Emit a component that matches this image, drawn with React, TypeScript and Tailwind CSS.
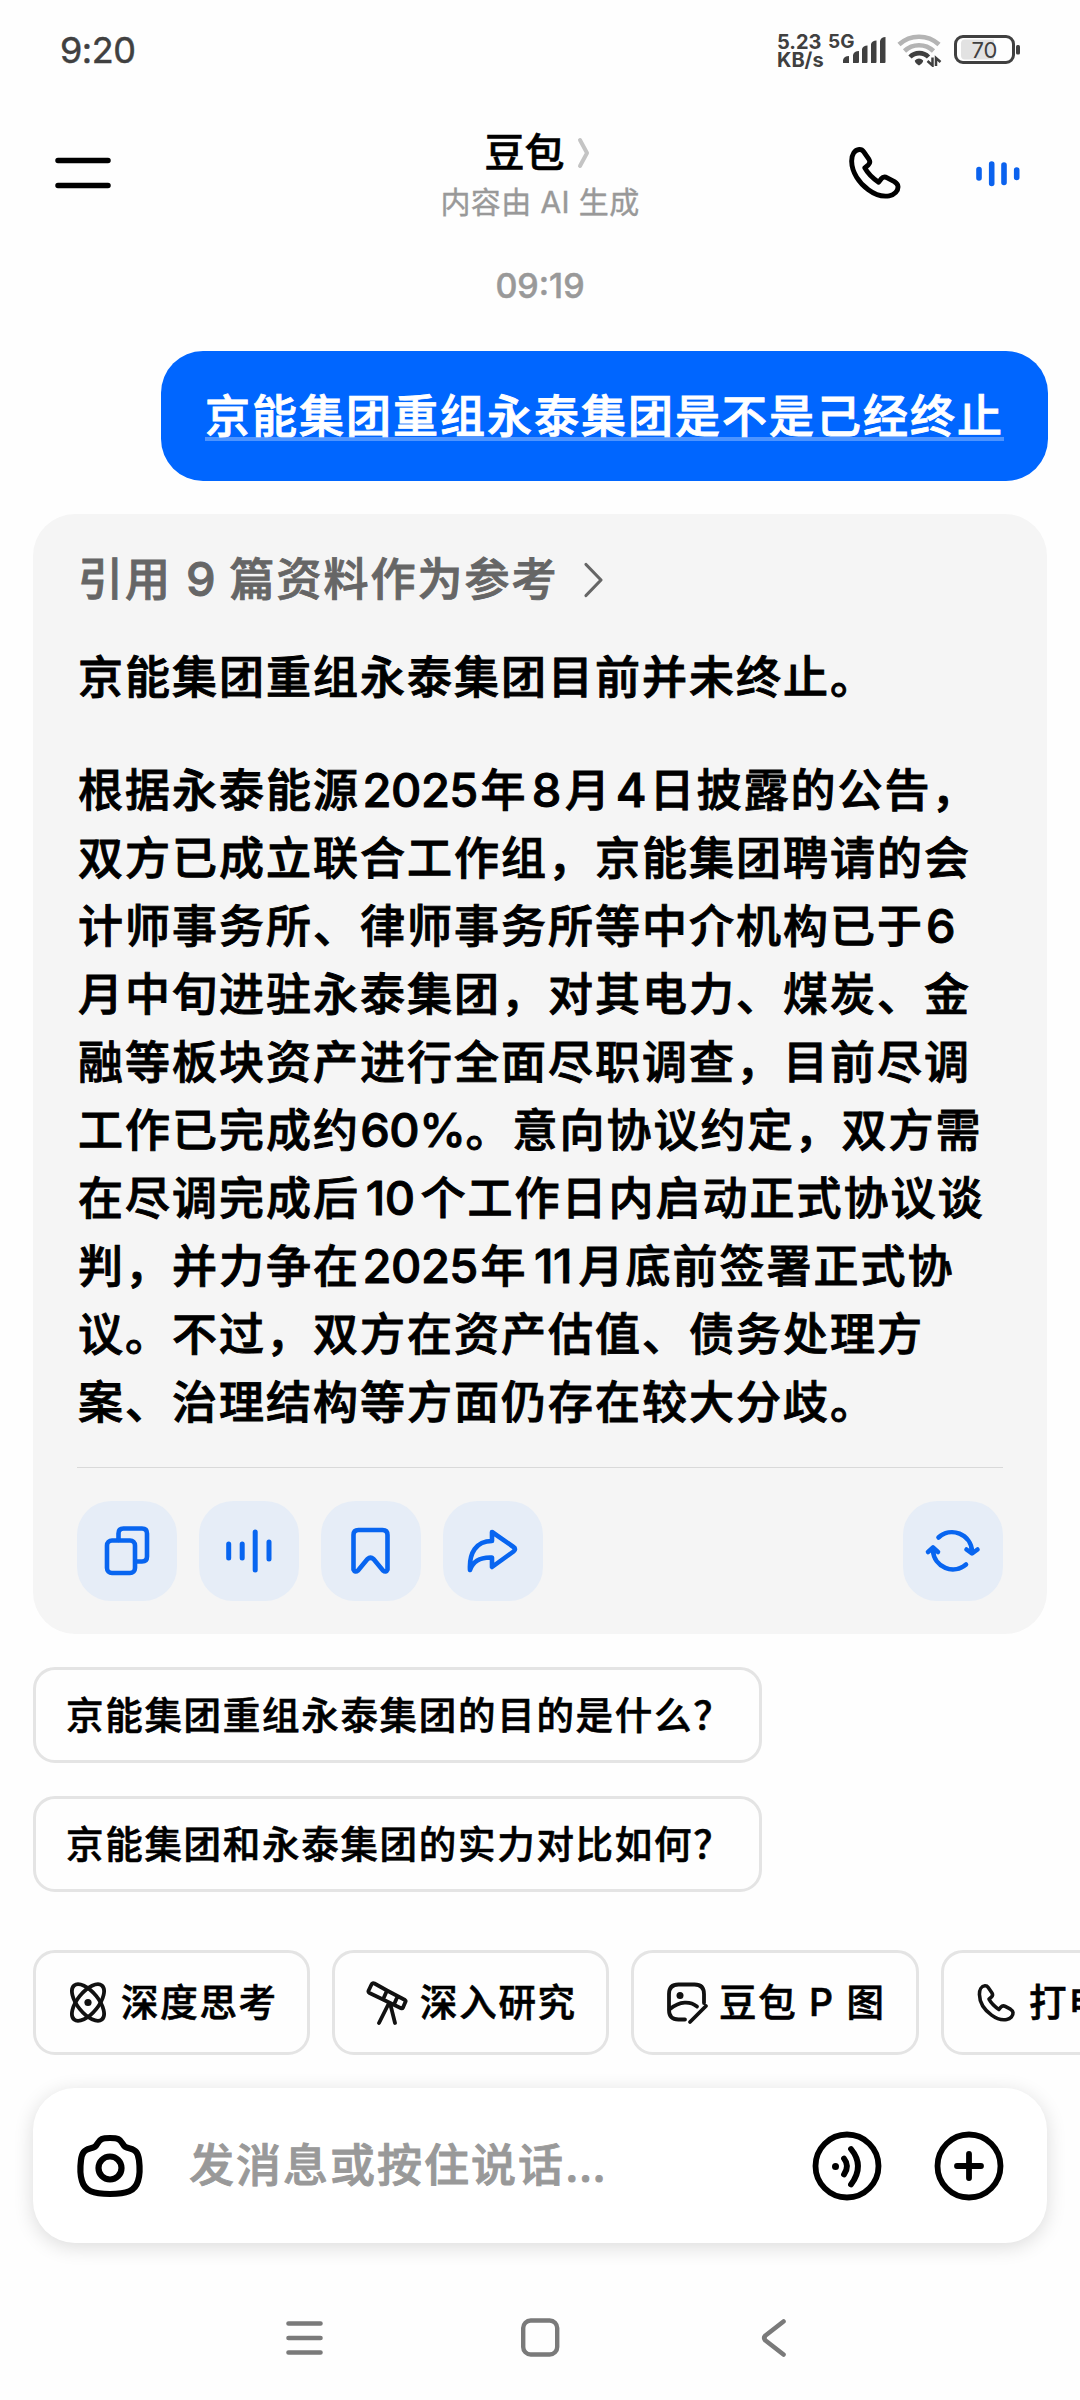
import React from "react";

const FONT = "font-['Inter','Noto_Sans_CJK_SC',sans-serif]";

type Segment = string | { num: string; box: string };

const ANSWER_LINES: Segment[][] = [
  [
    "根据永泰能源",
    { num: "2025", box: "w-[120.5px]" },
    "年",
    { num: "8", box: "w-[37.5px]" },
    "月",
    { num: "4", box: "w-[37.5px]" },
    "日披露的公告，",
  ],
  ["双方已成立联合工作组，京能集团聘请的会"],
  ["计师事务所、律师事务所等中介机构已于", { num: "6", box: "w-[33px]" }],
  ["月中旬进驻永泰集团，对其电力、煤炭、金"],
  ["融等板块资产进行全面尽职调查，目前尽调"],
  ["工作已完成约", { num: "60%", box: "w-[105.5px]" }, "。意向协议约定，双方需"],
  ["在尽调完成后", { num: "10", box: "w-[60.5px]" }, "个工作日内启动正式协议谈"],
  [
    "判，并力争在",
    { num: "2025", box: "w-[120.5px]" },
    "年",
    { num: "11", box: "w-[51px]" },
    "月底前签署正式协",
  ],
  ["议。不过，双方在资产估值、债务处理方"],
  ["案、治理结构等方面仍存在较大分歧。"],
];

const PHONE =
  "M10 2.5C5.5 2.8 2.5 7.5 2.6 14C2.8 25 10 35.500 19 42C25 46.500 33 49 39.500 47.900C44.500 47 48.500 43 48 38.500C47.800 36.700 46.500 35.300 44.500 34L37.500 30.200C35.300 29 33 29.500 31.500 31.300L29 34.500C24.500 31.500 18.500 26 15.500 20.500L19 17.500C20.500 16 20.700 14 19.600 12.200L14.500 4.800C13.400 3.200 12 2.400 10 2.500Z";

function StatusBar() {
  return (
    <div className="flex h-[100px] items-center justify-between pl-[60px] pr-[60px] text-[#404040]">
      <span className="text-[36px] leading-none tracking-[-0.5px] [-webkit-text-stroke:0.5px_currentColor]">9:20</span>
      <div className="flex h-[34px] items-start">
        <div className="w-[51px] text-[20px] font-bold leading-[18px]">
          <div>5.23</div>
          <div>KB/s</div>
        </div>
        <div className="w-[14px] whitespace-nowrap text-[19px] font-bold leading-[18px]">5G</div>
        <svg width="178" height="34" viewBox="842 33 178 34" fill="none">
          <g fill="#404040">
            <path d="M843 63v-3q1 -4 6 -4v7z" />
            <path d="M853 63v-8q1 -4 6 -4v11q0 1 -1 1z" />
            <path d="M862 63v-14q1 -3.500 5.500 -3.500v16.500q0 1 -1 1z" />
            <path d="M871 63v-19q1 -3.500 5.500 -3.500v21.500q0 1 -1 1z" />
            <path d="M880 63v-22q1 -4 5.500 -4v25q0 1 -1 1z" />
          </g>
          <g strokeWidth="4.600">
            <path d="M899 44.500a29.500 29.500 0 0 1 40 0" stroke="#b4b4b4" />
            <path d="M904.500 51a21 21 0 0 1 29 0" stroke="#b4b4b4" />
            <path d="M910 57a13 13 0 0 1 18.500 0" stroke="#404040" />
          </g>
          <path d="M914.800 60.500q4.200 -4 8.400 0q0 2.500 -4.200 5q-4.200 -2.500 -4.200 -5z" fill="#404040" />
          <path d="M932.500 57.500v8l-5 -4.500M936 66v-8l4.500 4" stroke="#404040" strokeWidth="2.500" />
          <rect x="955.500" y="36.500" width="58" height="26" rx="7.500" stroke="#404040" strokeWidth="3" />
          <path d="M965 39.500h29v20h-29q-4 0 -4 -4v-12q0 -4 4 -4z" fill="#e2e2e2" />
          <text x="984.500" y="58" fontSize="22" fill="#404040" textAnchor="middle">70</text>
          <rect x="1016" y="45" width="4" height="9.500" rx="1.500" fill="#404040" />
        </svg>
      </div>
    </div>
  );
}

function Header() {
  return (
    <header className="relative flex h-[148px] items-start justify-between pl-[55px] pr-[60px]">
      <svg className="mt-[56px]" width="56" height="34" viewBox="0 0 56 34" stroke="#000" strokeWidth="5.500" strokeLinecap="round">
        <path d="M3 4.500h50M3 29.500h50" />
      </svg>
      <div className="absolute inset-x-0 top-[27px] flex flex-col items-center">
        <div className="flex items-center gap-[12px] pr-[3px]">
          <span className="text-[40px] font-medium leading-[52px] [-webkit-text-stroke:0.6px_currentColor]">豆包</span>
          <svg width="16" height="32" viewBox="0 0 16 32" fill="none" stroke="#c4c4c4" strokeWidth="4" strokeLinecap="round" strokeLinejoin="round">
            <path d="M3 3L10 16L3 29" />
          </svg>
        </div>
        <span className="mt-[3px] text-[30px] leading-[40px] tracking-[0.4px] text-[#999] [-webkit-text-stroke:0.4px_currentColor]">内容由 AI 生成</span>
      </div>
      <div className="mt-[47px] flex items-center">
        <svg width="52" height="52" viewBox="0 0 51 51" fill="none" stroke="#000" strokeWidth="4.800" strokeLinejoin="round">
          <path d={PHONE} />
        </svg>
        <svg className="ml-[75px] mt-[2px]" width="44" height="30" viewBox="0 0 44 30" stroke="#0b62ee" strokeWidth="5.600" strokeLinecap="round">
          <path d="M3 10.500v8.500M15.700 5v19.500M28 6v17.500M40.700 11v7.500" />
        </svg>
      </div>
    </header>
  );
}

function Numeral({ text, box }: { text: string; box: string }) {
  return (
    <span className={`inline-block whitespace-nowrap text-center text-[47px] leading-[60px] tracking-[-0.5px] ${box}`}>
      {text}
    </span>
  );
}

function ActionButton({ children }: { children: React.ReactNode }) {
  return (
    <button className="flex size-[100px] items-center justify-center rounded-[34px] bg-[#e6edf7]">
      <svg width="100" height="100" viewBox="0 0 100 100" fill="none" stroke="#0865f0" strokeWidth="4.600" strokeLinecap="round" strokeLinejoin="round">
        {children}
      </svg>
    </button>
  );
}

function AnswerCard() {
  return (
    <section className="mx-[33px] mt-[33px] flex h-[1120px] flex-col rounded-[42px] bg-[#f5f5f5] px-[44px]">
      <div className="mt-[32px] flex h-[68px] items-center pl-px text-[45px] font-medium tracking-[2px] text-[#666]">
        <span className="[-webkit-text-stroke:0.9px_currentColor]">
          引用 <span className="text-[47px] leading-none tracking-[0px]">9</span> 篇资料作为参考
        </span>
        <svg className="ml-[24px]" width="22" height="36" viewBox="0 0 22 36" fill="none" stroke="#666" strokeWidth="3.200" strokeLinecap="round" strokeLinejoin="round">
          <path d="M3 2.500L18 18L3 33.500" />
        </svg>
      </div>
      <div className="whitespace-nowrap pl-px text-[45px] font-medium leading-[68px] tracking-[2px] [-webkit-text-stroke:0.9px_currentColor]">
        <p className="mt-[30px]">京能集团重组永泰集团目前并未终止。</p>
        <div className="mt-[45px]">
          {ANSWER_LINES.map((line, i) => (
            <p key={i} className="h-[68px]">
              {line.map((part, j) =>
                typeof part === "string" ? <React.Fragment key={j}>{part}</React.Fragment> : <Numeral key={j} text={part.num} box={part.box} />
              )}
            </p>
          ))}
        </div>
      </div>
      <div className="mt-[30px] h-px shrink-0 bg-[#d9d9d9]" />
      <div className="mt-[33px] flex gap-[22px]">
        <ActionButton>
          <rect x="30" y="39.500" width="28" height="32.500" rx="5" />
          <path d="M41.500 39v-6.500q0 -5 5 -5h18.500q5 0 5 5v23q0 5 -5 5h-6" />
        </ActionButton>
        <ActionButton>
          <path d="M29.700 43v14M43.200 43v14M56.200 31v38M70 41v17" strokeWidth="5" />
        </ActionButton>
        <ActionButton>
          <path d="M32.500 34q0 -5 5 -5h24q5 0 5 5v34.500q-1.500 3.500 -4.500 1l-9.500 -11.500q-3 -2.500 -6 0l-9.500 11.500q-3 2.500 -4.500 -1z" />
        </ActionButton>
        <ActionButton>
          <path d="M49 31l21.500 15q3 2 0 4.500L49 66V56.500C38 56 30 60 27 69C26 52 33 40 49 40Z" />
        </ActionButton>
        <div className="ml-auto">
          <ActionButton>
            <path d="M35.500 36.500A20 20 0 0 1 69 50v2M63.500 48.500l5.500 4l5.500 -4M63 63.500A20 20 0 0 1 30 50v-2M25 51l5 -4.500l5 4.500" />
          </ActionButton>
        </div>
      </div>
    </section>
  );
}

function Suggestion({ text }: { text: string }) {
  return (
    <button className="flex h-[96px] w-[729px] items-center whitespace-nowrap rounded-[22px] border-[3px] border-[#e4e4e4] pl-[30px] pt-[2px] text-[37.5px] font-medium tracking-[1.7px] [-webkit-text-stroke:0.6px_currentColor]">
      {text}
    </button>
  );
}

function Chip({ label, width, children }: { label: React.ReactNode; width: string; children: React.ReactNode }) {
  return (
    <button className={`flex h-[105px] shrink-0 items-center gap-[10px] whitespace-nowrap rounded-[22px] border-[3px] border-[#e4e4e4] pl-[31px] text-[37.5px] font-medium tracking-[1.7px] ${width}`}>
      <svg width="44" height="44" viewBox="0 0 44 44" fill="none" stroke="#111" strokeWidth="3.800" strokeLinecap="round" strokeLinejoin="round">
        {children}
      </svg>
      <span className="pt-[2px] [-webkit-text-stroke:0.6px_currentColor]">{label}</span>
    </button>
  );
}

function Chips() {
  return (
    <div className="ml-[33px] mt-[58px] flex gap-[22px] overflow-hidden">
      <Chip label="深度思考" width="w-[277px]">
        <ellipse cx="21" cy="21.500" rx="22" ry="10.500" transform="rotate(51 21 21.500)" />
        <ellipse cx="21" cy="21.500" rx="22" ry="10.500" transform="rotate(-51 21 21.500)" />
        <circle cx="21" cy="21.500" r="3.600" fill="#111" stroke="none" />
      </Chip>
      <Chip label="深入研究" width="w-[277px]">
        <path d="M8.500 2.500L21 9.500l-4 9L3.500 12q-1.500 -0.800 -1 -2.200L5.500 3.500q1 -2 3 -1zM21 9.500l18 9.500q1 0.700 0.500 1.800L37 26.500q-0.700 1.300 -2 0.700L17 18.500M31.500 15.500l-3.500 8M23 22L13 42M24 22l5 20" />
      </Chip>
      <Chip label="豆包 P 图" width="w-[288px]">
        <path d="M39 22V13q0 -9.500 -9.500 -9.500h-16Q4 3.500 4 13v16q0 9.500 9.500 9.500H20M5 28C15 20 25 20 32 25.500M41 25L25 41" />
        <circle cx="15" cy="14.500" r="3.500" fill="#111" stroke="none" />
      </Chip>
      <Chip label="打电话" width="w-[240px]">
        <path d={PHONE} transform="translate(2.500 3) scale(0.740)" strokeWidth="4.800" />
      </Chip>
    </div>
  );
}

function InputBar() {
  return (
    <div className="mx-[33px] mt-[33px] flex h-[155px] items-center rounded-[42px] bg-white pl-[43px] pr-[43px] shadow-[0_4px_20px_rgba(0,0,0,0.140)]">
      <svg width="68" height="64" viewBox="0 0 68 64" fill="none" stroke="#000" strokeWidth="6.200" strokeLinejoin="round">
        <path d="M34 4C26 4 24 5 21.500 9.500C19.500 13 18.500 13.500 14 14.500C8 16 6 19 5 26C4 34 4 41 6 47C9 57 17 60 34 60C51 60 59 57 62 47C64 41 64 34 63 26C62 19 60 16 54 14.500C49.500 13.500 48.500 13 46.500 9.500C44 5 42 4 34 4Z" />
        <circle cx="34" cy="34" r="11.500" />
      </svg>
      <span className="ml-[45px] text-[45px] font-medium tracking-[2px] text-[#999] [-webkit-text-stroke:0.9px_currentColor]">
        发消息或按住说话<span className="tracking-[0px]">...</span>
      </span>
      <svg className="ml-auto" width="70" height="70" viewBox="0 0 70 70" fill="none" stroke="#000" strokeWidth="5.800" strokeLinecap="round">
        <circle cx="35" cy="35" r="31.500" />
        <circle cx="23.500" cy="35.500" r="3.500" fill="#000" stroke="none" />
        <path d="M32 27.500q6 7.500 0 16M39 18q14 17 0 35.500" />
      </svg>
      <svg className="ml-[52px]" width="70" height="70" viewBox="0 0 70 70" fill="none" stroke="#000" strokeWidth="5.800" strokeLinecap="round">
        <circle cx="35" cy="35" r="31.500" />
        <path d="M35 23v24M23 35h24" />
      </svg>
    </div>
  );
}

function NavBar() {
  return (
    <div className="mt-[71px] flex items-center pl-[285px]">
      <svg width="38" height="48" viewBox="0 0 38 48" stroke="#7a7a7a" strokeWidth="4.600" strokeLinecap="round">
        <path d="M3.500 9.500h32M3.500 24h32M3.500 38.500h32" />
      </svg>
      <svg className="ml-[197px]" width="40" height="48" viewBox="0 0 40 48" fill="none" stroke="#7a7a7a" strokeWidth="4.400">
        <rect x="3.200" y="6.500" width="34" height="34" rx="7.500" />
      </svg>
      <svg className="ml-[201px]" width="26" height="48" viewBox="0 0 26 48" fill="none" stroke="#7a7a7a" strokeWidth="4.600" strokeLinecap="round" strokeLinejoin="round">
        <path d="M22.500 7.500L4.500 21.500q-2.500 2.500 0 5L22.500 40.500" />
      </svg>
    </div>
  );
}

export default function App() {
  return (
    <main className={`h-[2400px] w-[1080px] overflow-hidden bg-[#fefefe] text-black ${FONT}`}>
      <StatusBar />
      <Header />
      <div className="mt-[17px] text-center text-[34px] font-medium leading-[42px] text-[#999] [-webkit-text-stroke:0.5px_currentColor]">09:19</div>
      <div className="mt-[44px] flex justify-end pr-[32px]">
        <div className="flex h-[130px] w-[887px] items-center justify-center whitespace-nowrap rounded-[42px] bg-[#0066ff] text-[45px] font-medium tracking-[2px] text-white">
          <span className="relative pt-px leading-[68px] [-webkit-text-stroke:0.9px_currentColor]">
            京能集团重组永泰集团是不是己经终止
            <span className="absolute inset-x-0 bottom-[10px] h-[4px] bg-white/30" />
          </span>
        </div>
      </div>
      <AnswerCard />
      <div className="ml-[33px] mt-[33px] flex flex-col gap-[33px]">
        <Suggestion text="京能集团重组永泰集团的目的是什么？" />
        <Suggestion text="京能集团和永泰集团的实力对比如何？" />
      </div>
      <Chips />
      <InputBar />
      <NavBar />
    </main>
  );
}
